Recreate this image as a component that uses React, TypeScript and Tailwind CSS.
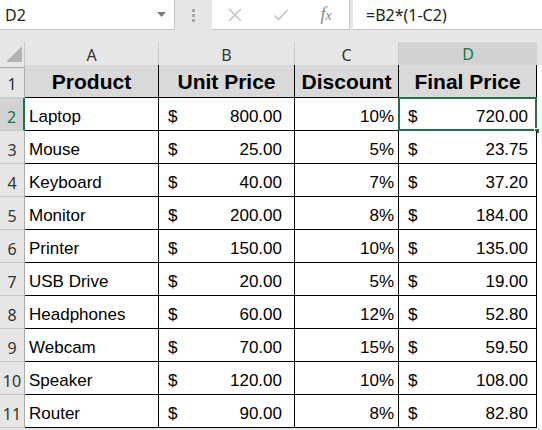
import React from "react";

const rows = [
  ["Laptop", "800.00", "10%", "720.00"],
  ["Mouse", "25.00", "5%", "23.75"],
  ["Keyboard", "40.00", "7%", "37.20"],
  ["Monitor", "200.00", "8%", "184.00"],
  ["Printer", "150.00", "10%", "135.00"],
  ["USB Drive", "20.00", "5%", "19.00"],
  ["Headphones", "60.00", "12%", "52.80"],
  ["Webcam", "70.00", "15%", "59.50"],
  ["Speaker", "120.00", "10%", "108.00"],
  ["Router", "90.00", "8%", "82.80"],
];

const grid = "grid grid-cols-[25px_134px_136px_104px_138px_5px]";
const ui = "font-['Noto_Sans','Open_Sans',sans-serif]";
const cell = "font-['Liberation_Sans',Arial,sans-serif]";

export default function App() {
  return (
    <div className="w-[542px] h-[430px] bg-[#e6e6e6] overflow-hidden relative">
      {/* formula bar */}
      <div className="flex h-[30px] items-stretch">
        <div className={`w-[175px] bg-white border-r border-b border-[#c6c6c6] flex items-center justify-between pl-[5px] pr-[8px] text-[16px] text-[#222] ${ui}`}>
          <span>D2</span>
          <svg width="9" height="5" viewBox="0 0 9 5"><path d="M0 0h9L4.5 5z" fill="#7a7a7a" /></svg>
        </div>
        <div className="w-[37px] flex items-center justify-center">
          <div className="flex flex-col gap-[2px]">
            <div className="w-[3px] h-[3px] bg-[#a8a8a8]" />
            <div className="w-[3px] h-[3px] bg-[#a8a8a8]" />
            <div className="w-[3px] h-[3px] bg-[#a8a8a8]" />
          </div>
        </div>
        <div className="w-[138px] bg-white border-r border-b border-[#c6c6c6] flex items-center">
          <div className="w-[46px] flex justify-center">
            <svg width="16" height="16" viewBox="0 0 16 16"><path d="M2 2L14 14M14 2L2 14" stroke="#c4c4c4" strokeWidth="1.6" /></svg>
          </div>
          <div className="w-[46px] flex justify-center">
            <svg width="16" height="16" viewBox="0 0 16 16"><path d="M1.5 8.5L5.5 12.5L14.5 3" stroke="#c4c4c4" strokeWidth="1.6" fill="none" /></svg>
          </div>
          <div className="w-[46px] flex justify-center">
            <span className="font-['Liberation_Serif',serif] italic text-[18px] text-[#888]">f<span className="text-[14px]">x</span></span>
          </div>
        </div>
        <div className="w-[3px]" />
        <div className={`flex-1 bg-white border-b border-[#c6c6c6] flex items-center pl-[13px] text-[16px] text-[#222] ${ui}`}>
          =B2*(1-C2)
        </div>
      </div>
      <div className="h-[12px]" />
      {/* column headers */}
      <div className={`${grid} h-[23px] ${ui} text-[16px] text-[#333]`}>
        <div className="relative border-r border-[#c8c8c8] border-b border-b-[#ababab]">
          <svg className="absolute left-[6px] top-[4px]" width="16" height="16" viewBox="0 0 16 16"><path d="M16 0V16H0z" fill="#b4b4b4" /></svg>
        </div>
        {["A", "B", "C"].map((c) => (
          <div key={c} className="flex items-center justify-center border-r border-[#c8c8c8] border-b border-b-[#ababab]">{c}</div>
        ))}
        <div className="flex items-center justify-center bg-[#d2d2d2] text-[#217346] border-b-2 border-[#217346]">D</div>
        <div className="border-b border-[#ababab]" />
      </div>
      {/* rows */}
      <div className={`${grid} h-[33px]`}>
        <div className={`flex items-end justify-center pb-[1px] text-[16px] text-[#333] border-r border-[#ababab] border-b border-b-[#c8c8c8] ${ui}`}>1</div>
        {["Product", "Unit Price", "Discount", "Final Price"].map((h) => (
          <div key={h} className={`bg-[#d9d9d9] flex items-end justify-center pb-0 text-[21px] font-bold text-black border-r border-b border-black ${cell}`}>{h}</div>
        ))}
        <div className="bg-white" />
      </div>
      {rows.map((r, i) => {
        const sel = i === 0;
        return (
          <div key={i} className={`${grid} h-[33px]`}>
            <div
              className={`flex items-end justify-center pb-[1px] text-[16px] border-b border-b-[#c8c8c8] ${ui} ${
                sel ? "bg-[#d2d2d2] text-[#217346] border-r-2 border-r-[#217346]" : "text-[#333] border-r border-r-[#ababab]"
              }`}
            >
              {i + 2}
            </div>
            <div className={`bg-white flex items-end pb-[1px] pl-[4px] text-[17px] text-black border-r border-b border-black ${cell}`}>{r[0]}</div>
            <div className={`bg-white flex items-end justify-between pb-[1px] pl-[9px] pr-[12px] text-[17px] text-black border-r border-b border-black ${cell}`}>
              <span>$</span>
              <span>{r[1]}</span>
            </div>
            <div className={`bg-white flex items-end justify-end pb-[1px] pr-[4px] text-[17px] text-black border-r border-b border-black ${cell}`}>{r[2]}</div>
            <div className={`relative bg-white flex items-end justify-between pb-[1px] pl-[9px] pr-[8px] text-[17px] text-black border-r border-b border-black ${cell}`}>
              <span>$</span>
              <span>{r[3]}</span>
              {sel && (
                <>
                  <div className="absolute left-[-1px] top-[-1px] right-[-1px] bottom-[-1px] border-2 border-[#217346]" />
                  <div className="absolute right-[-4px] bottom-[-4px] w-[6px] h-[6px] bg-[#217346] border border-white" />
                </>
              )}
            </div>
            <div className="bg-white" />
          </div>
        );
      })}
    </div>
  );
}
